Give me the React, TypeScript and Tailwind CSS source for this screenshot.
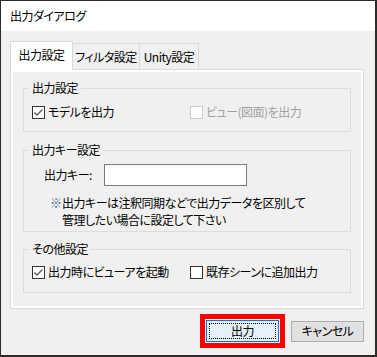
import React from 'react';

function CheckBox({ checked, disabled }: { checked?: boolean; disabled?: boolean }) {
  return (
    <span
      className={`flex h-[13px] w-[13px] shrink-0 items-center justify-center border bg-white ${
        disabled ? 'border-[#cccccc]' : 'border-[#333333]'
      }`}
    >
      {checked && (
        <svg width="11" height="11" viewBox="0 0 11 11">
          <path d="M1.5 5.5 L4 8 L9.5 2.5" fill="none" stroke="#5a5a5a" strokeWidth="1.4" />
        </svg>
      )}
    </span>
  );
}

function Check({ label, checked, disabled, className = '' }: { label: string; checked?: boolean; disabled?: boolean; className?: string }) {
  return (
    <div className={`flex h-[16px] items-center gap-[3px] whitespace-nowrap ${className}`}>
      <CheckBox checked={checked} disabled={disabled} />
      <span className={`text-[12px] leading-[16px] ${disabled ? 'text-[#a0a0a0]' : 'text-black'}`}>{label}</span>
    </div>
  );
}

function Group({ title, children, className = '' }: { title: string; children: React.ReactNode; className?: string }) {
  return (
    <fieldset className={`mx-[10px] border border-[#dcdcdc] ${className}`}>
      <legend className="ml-[5px] whitespace-nowrap px-[3px] text-[12px] leading-[16px] text-black">{title}</legend>
      {children}
    </fieldset>
  );
}

export default function App() {
  return (
    <div className="h-[357px] w-[377px] bg-[#2f2b27] pl-px pt-px font-['Noto_Sans_CJK_JP','Noto_Sans',sans-serif] tracking-[-0.5px] [font-feature-settings:'palt']">
      <div className="flex h-[354px] w-[374px] flex-col bg-[#f0f0f0]">
        {/* Title bar */}
        <div className="flex h-[30px] items-center bg-white pl-[9px] text-[12px] text-black">出力ダイアログ</div>

        <div className="px-[9px] pt-[10px]">
          {/* Tabs */}
          <div className="flex items-end whitespace-nowrap">
            <div className="relative z-10 -mb-px flex h-[29px] w-[63px] items-center justify-center border border-b-0 border-[#d9d9d9] bg-white pb-[2px] text-[12px] text-black">
              出力設定
            </div>
            <div className="flex h-[26px] w-[67px] items-center justify-center border-t border-r border-[#d9d9d9] bg-[#f0f0f0] text-[12px] text-black">
              フィルタ設定
            </div>
            <div className="flex h-[26px] w-[59px] items-center justify-center border-t border-r border-[#d9d9d9] bg-[#f0f0f0] text-[12px] text-black">
              Unity設定
            </div>
          </div>

          {/* Tab page */}
          <div className="h-[240px] w-[354px] border border-[#d9d9d9] bg-white p-[2px]">
            <div className="flex h-full flex-col bg-[#f0f0f0] pt-[8px]">
              <Group title="出力設定" className="pb-[11px]">
                <div className="flex pl-[8px] pt-[8px]">
                  <Check label="モデルを出力" checked className="w-[158px]" />
                  <Check label="ビュー(図面)を出力" disabled />
                </div>
              </Group>

              <Group title="出力キー設定" className="mt-[10px] pb-[3px]">
                <div className="flex items-center pl-[20px] pt-[6px]">
                  <span className="w-[60px] whitespace-nowrap text-[12px] text-black">出力キー:</span>
                  <div className="h-[22px] w-[143px] border border-[#7a7a7a] bg-white" />
                </div>
                <div className="mt-[8px] flex whitespace-nowrap pl-[26px] text-[12px] leading-[17px] text-black">
                  <span className="w-[12px] text-[#3a5fa0]">※</span>
                  <div>
                    <div>出力キーは注釈同期などで出力データを区別して</div>
                    <div>管理したい場合に設定して下さい</div>
                  </div>
                </div>
              </Group>

              <Group title="その他設定" className="mt-[9px] pb-[12px]">
                <div className="flex pl-[8px] pt-[7px]">
                  <Check label="出力時にビューアを起動" checked className="w-[158px]" />
                  <Check label="既存シーンに追加出力" />
                </div>
              </Group>
            </div>
          </div>

          {/* Buttons */}
          <div className="mt-[5px] flex items-center justify-end gap-[6px] pr-[2px]">
            <div className="border-[5px] border-[#ff0000] p-px">
              <button className="flex h-[22px] w-[73px] border border-[#0078d7] bg-[#e5f1fb] p-[2px]">
                <span className="flex h-full w-full items-center justify-center border border-dotted border-black text-[12px] text-black">
                  出力
                </span>
              </button>
            </div>
            <button className="flex h-[21px] w-[73px] items-center justify-center border border-[#adadad] bg-[#e1e1e1] text-[12px] text-black">
              キャンセル
            </button>
          </div>
        </div>
      </div>
    </div>
  );
}
